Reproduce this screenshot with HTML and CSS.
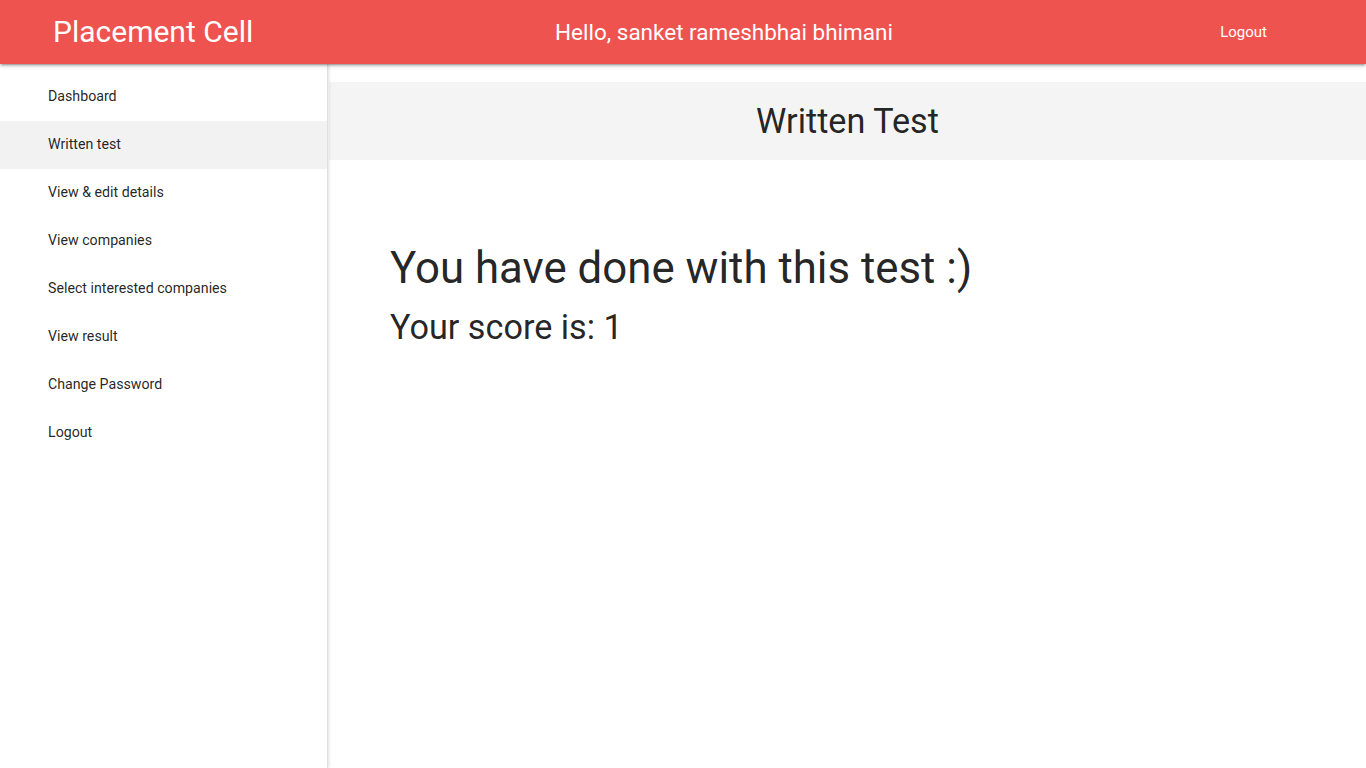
FILE: index.html
```html
<!DOCTYPE html>
<html lang="en">
<head>
<meta charset="utf-8">
<title>Placement Cell - Written Test</title>
<link rel="stylesheet" href="styles.css">
</head>
<body>
<header class="topbar">
  <div class="brand">Placement Cell</div>
  <div class="greeting">Hello, sanket rameshbhai bhimani</div>
  <a class="top-logout" href="#">Logout</a>
</header>
<div class="layout">
  <nav class="sidenav">
    <ul>
      <li><a href="#">Dashboard</a></li>
      <li class="active"><a href="#">Written test</a></li>
      <li><a href="#">View &amp; edit details</a></li>
      <li><a href="#">View companies</a></li>
      <li><a href="#">Select interested companies</a></li>
      <li><a href="#">View result</a></li>
      <li><a href="#">Change Password</a></li>
      <li><a href="#">Logout</a></li>
    </ul>
  </nav>
  <main class="main">
    <div class="page-title">Written Test</div>
    <section class="result">
      <h3 class="done">You have done with this test :)</h3>
      <h4 class="score">Your score is: 1</h4>
    </section>
  </main>
</div>
</body>
</html>
```
FILE: styles.css
```css
* { box-sizing: border-box; }
html, body { margin: 0; padding: 0; height: 100%; }
body {
  font-family: Roboto, "Liberation Sans", sans-serif;
  color: rgba(0,0,0,0.87);
  background: #fff;
  overflow: hidden;
}
.topbar {
  position: relative;
  z-index: 3;
  height: 64px;
  background: #ef5350;
  color: #fff;
  display: flex;
  align-items: center;
  padding: 0 99px 0 53px;
  box-shadow: 0 2px 2px 0 rgba(0,0,0,0.14), 0 3px 1px -2px rgba(0,0,0,0.12), 0 1px 5px 0 rgba(0,0,0,0.2);
}
.brand {
  font-size: 30px;
  line-height: 64px;
  width: 502px;
  flex: none;
}
.greeting {
  font-size: 22.5px;
  line-height: 64px;
}
.top-logout {
  margin-left: auto;
  color: #fff;
  text-decoration: none;
  font-size: 15px;
}
.layout {
  display: flex;
  height: calc(100vh - 64px);
}
.sidenav {
  position: relative;
  z-index: 2;
  width: 328px;
  flex: none;
  background: #fff;
  border-right: 1px solid #e0e0e0;
  box-shadow: 1px 0 3px rgba(0,0,0,0.12);
  padding-top: 9px;
}
.sidenav ul { list-style: none; margin: 0; padding: 0; }
.sidenav li a {
  display: block;
  height: 48px;
  line-height: 46px;
  padding: 0 48px;
  font-size: 14.2px;
  font-weight: 400;
  color: rgba(0,0,0,0.87);
  text-decoration: none;
}
.sidenav li.active { background: #f2f2f2; }
.main {
  flex: 1;
  padding-top: 18px;
  padding-left: 1px;
}
.page-title {
  background: #f4f4f4;
  height: 78px;
  line-height: 78px;
  text-align: center;
  font-size: 34.2px;
  color: rgba(0,0,0,0.87);
}
.result {
  padding: 84px 0 0 61px;
}
.done {
  margin: 0 0 16px;
  font-size: 43.8px;
  font-weight: 400;
  line-height: 48px;
}
.score {
  margin: 0;
  font-size: 34.2px;
  font-weight: 400;
  line-height: 38px;
}
```
